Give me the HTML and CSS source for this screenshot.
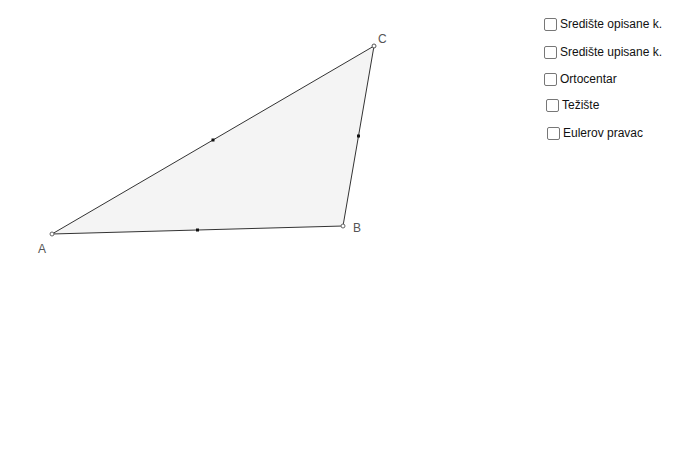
FILE: index.html
```html
<!DOCTYPE html>
<html>
<head>
<meta charset="utf-8">
<link rel="stylesheet" href="styles.css">
</head>
<body>
<div class="applet">
  <svg class="canvas" width="700" height="450" viewBox="0 0 700 450">
    <polygon points="52,234 343,226 374,46" fill="#f4f4f4" stroke="none"/>
    <line x1="52" y1="234" x2="343" y2="226" stroke="#333" stroke-width="1"/>
    <line x1="343" y1="226" x2="374" y2="46" stroke="#333" stroke-width="1"/>
    <line x1="374" y1="46" x2="52" y2="234" stroke="#333" stroke-width="1"/>
    <rect x="196" y="228.5" width="3" height="3" fill="#111"/>
    <rect x="357" y="134.5" width="3" height="3" fill="#111"/>
    <rect x="211.5" y="138.5" width="3" height="3" fill="#111"/>
    <circle cx="52" cy="234" r="2" fill="#fff" stroke="#666" stroke-width="1"/>
    <circle cx="343" cy="226" r="2" fill="#fff" stroke="#666" stroke-width="1"/>
    <circle cx="374" cy="46" r="2" fill="#fff" stroke="#555" stroke-width="1"/>
    <text class="lbl" x="38" y="253">A</text>
    <text class="lbl" x="353" y="232">B</text>
    <text class="lbl" x="378" y="43">C</text>
  </svg>
  <div class="cb r1"><span class="box"></span><span class="txt">Središte opisane k.</span></div>
  <div class="cb r2"><span class="box"></span><span class="txt">Središte upisane k.</span></div>
  <div class="cb r3"><span class="box"></span><span class="txt">Ortocentar</span></div>
  <div class="cb r4"><span class="box"></span><span class="txt">Težište</span></div>
  <div class="cb r5"><span class="box"></span><span class="txt">Eulerov pravac</span></div>
</div>
</body>
</html>
```
FILE: styles.css
```css
html, body {
  margin: 0;
  padding: 0;
  background: #fff;
}
.applet {
  position: relative;
  width: 700px;
  height: 450px;
  overflow: hidden;
  font-family: "Liberation Sans", Arial, sans-serif;
}
.canvas {
  display: block;
}
.lbl {
  font-family: "Liberation Sans", Arial, sans-serif;
  font-size: 12px;
  fill: #555;
}
.cb {
  position: absolute;
  display: flex;
  align-items: center;
  gap: 3px;
  font-size: 12px;
  color: #111;
  height: 14px;
}
.box {
  width: 11px;
  height: 11px;
  border: 1px solid #777;
  border-radius: 2px;
  background: #fff;
}
.r1 { left: 544px; top: 17px; }
.r2 { left: 544px; top: 45px; }
.r3 { left: 544px; top: 72px; }
.r4 { left: 546px; top: 98px; }
.r5 { left: 547px; top: 126px; }
```
